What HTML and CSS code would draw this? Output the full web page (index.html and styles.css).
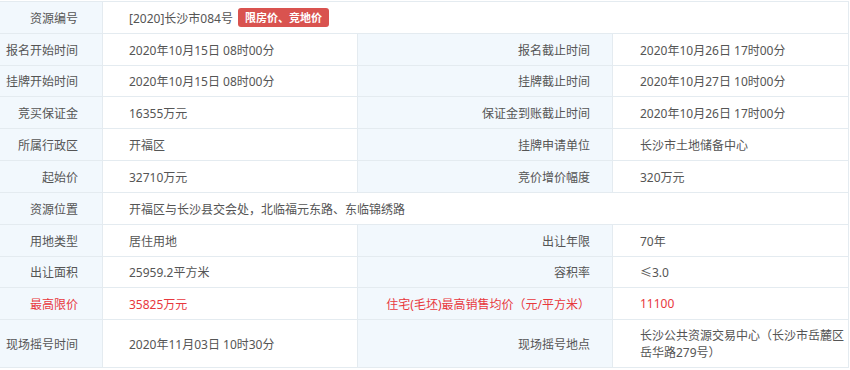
FILE: index.html
```html
<!DOCTYPE html>
<html lang="zh-CN">
<head>
<meta charset="utf-8">
<title>资源信息</title>
<link rel="stylesheet" href="styles.css">
</head>
<body>
<div class="page">
  <div class="sheet">
    <div class="cell label l1">资源编号</div>
    <div class="cell value wide">[2020]长沙市084号<span class="badge">限房价、竞地价</span></div>

    <div class="cell label l1">报名开始时间</div>
    <div class="cell value">2020年10月15日 08时00分</div>
    <div class="cell label l2">报名截止时间</div>
    <div class="cell value v2">2020年10月26日 17时00分</div>

    <div class="cell label l1">挂牌开始时间</div>
    <div class="cell value">2020年10月15日 08时00分</div>
    <div class="cell label l2">挂牌截止时间</div>
    <div class="cell value v2">2020年10月27日 10时00分</div>

    <div class="cell label l1">竞买保证金</div>
    <div class="cell value">16355万元</div>
    <div class="cell label l2">保证金到账截止时间</div>
    <div class="cell value v2">2020年10月26日 17时00分</div>

    <div class="cell label l1">所属行政区</div>
    <div class="cell value">开福区</div>
    <div class="cell label l2">挂牌申请单位</div>
    <div class="cell value v2">长沙市土地储备中心</div>

    <div class="cell label l1">起始价</div>
    <div class="cell value">32710万元</div>
    <div class="cell label l2">竞价增价幅度</div>
    <div class="cell value v2">320万元</div>

    <div class="cell label l1">资源位置</div>
    <div class="cell value wide">开福区与长沙县交会处，北临福元东路、东临锦绣路</div>

    <div class="cell label l1">用地类型</div>
    <div class="cell value">居住用地</div>
    <div class="cell label l2">出让年限</div>
    <div class="cell value v2">70年</div>

    <div class="cell label l1">出让面积</div>
    <div class="cell value">25959.2平方米</div>
    <div class="cell label l2">容积率</div>
    <div class="cell value v2">≤3.0</div>

    <div class="cell label l1 red">最高限价</div>
    <div class="cell value red">35825万元</div>
    <div class="cell label l2 red">住宅(毛坯)最高销售均价（元/平方米）</div>
    <div class="cell value v2 red">11100</div>

    <div class="cell label l1">现场摇号时间</div>
    <div class="cell value">2020年11月03日 10时30分</div>
    <div class="cell label l2">现场摇号地点</div>
    <div class="cell value v2 multi">长沙公共资源交易中心（长沙市岳麓区岳华路279号）</div>
  </div>
</div>
</body>
</html>
```
FILE: styles.css
```css
html, body {
  margin: 0;
  padding: 0;
  background: #ffffff;
}

.page {
  padding-top: 1px;
  font-family: "Noto Sans", "Noto Sans CJK SC", "Microsoft YaHei", sans-serif;
  font-size: 12px;
  color: #555555;
}

.sheet {
  display: grid;
  grid-template-columns: 103px 255px 255px 236px;
  grid-template-rows: 32px 32px 31px 32px 32px 32px 32px 32px 31px 32px 48px;
  border-top: 1px solid #e4ebf0;
  width: 849px;
}

.cell {
  display: flex;
  align-items: center;
  box-sizing: border-box;
  border-right: 1px solid #e4ebf0;
  border-bottom: 1px solid #e4ebf0;
  white-space: nowrap;
  min-width: 0;
}

.label {
  background: #f2f8fd;
  justify-content: flex-end;
}

.l1 {
  padding-right: 24px;
}

.l2 {
  padding-right: 22px;
}

.value {
  background: #ffffff;
  padding-left: 26px;
}

.v2 {
  padding-left: 27px;
  padding-right: 2px;
}

.wide {
  grid-column: span 3;
}

.multi {
  white-space: normal;
  line-height: 17px;
}

.red {
  color: #e8383d;
}

.badge {
  display: inline-block;
  margin-left: 5px;
  padding: 0 7px;
  height: 19px;
  line-height: 19px;
  border-radius: 3px;
  background: #d9534f;
  color: #ffffff;
  font-family: "Noto Sans CJK SC", sans-serif;
  font-weight: bold;
  font-size: 11px;
}
```
